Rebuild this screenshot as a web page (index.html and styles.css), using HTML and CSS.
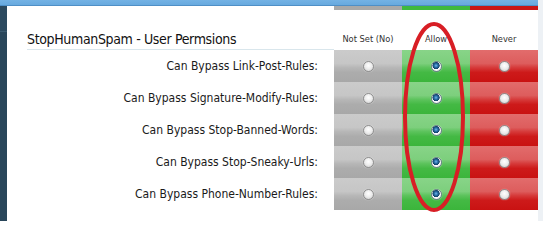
FILE: index.html
```html
<!DOCTYPE html>
<html>
<head>
<meta charset="utf-8">
<link rel="stylesheet" href="styles.css">
</head>
<body>
<div class="frame">
  <div class="content">
    <div class="topbar"></div>
    <div class="body">
      <div class="sidebar"></div>
      <div class="main">
        <div class="perm-grid">
          <div class="strip-blank"></div>
          <div class="strip strip-gray"></div>
          <div class="strip strip-green"></div>
          <div class="strip strip-red"></div>

          <div class="title-cell"><h2 class="title">StopHumanSpam - User Permsions</h2></div>
          <div class="col-head">Not Set (No)</div>
          <div class="col-head">Allow</div>
          <div class="col-head">Never</div>

          <div class="label">Can Bypass Link-Post-Rules:</div>
          <div class="cell cell-gray"><span class="radio"></span></div>
          <div class="cell cell-green"><span class="radio checked"></span></div>
          <div class="cell cell-red"><span class="radio"></span></div>

          <div class="label">Can Bypass Signature-Modify-Rules:</div>
          <div class="cell cell-gray"><span class="radio"></span></div>
          <div class="cell cell-green"><span class="radio checked"></span></div>
          <div class="cell cell-red"><span class="radio"></span></div>

          <div class="label">Can Bypass Stop-Banned-Words:</div>
          <div class="cell cell-gray"><span class="radio"></span></div>
          <div class="cell cell-green"><span class="radio checked"></span></div>
          <div class="cell cell-red"><span class="radio"></span></div>

          <div class="label">Can Bypass Stop-Sneaky-Urls:</div>
          <div class="cell cell-gray"><span class="radio"></span></div>
          <div class="cell cell-green"><span class="radio checked"></span></div>
          <div class="cell cell-red"><span class="radio"></span></div>

          <div class="label">Can Bypass Phone-Number-Rules:</div>
          <div class="cell cell-gray"><span class="radio"></span></div>
          <div class="cell cell-green"><span class="radio checked"></span></div>
          <div class="cell cell-red"><span class="radio"></span></div>
        </div>
      </div>
    </div>
  </div>
  <div class="edge"></div>
  <svg class="annotation" width="543" height="221" viewBox="0 0 543 221">
    <ellipse cx="434" cy="117" rx="29" ry="93" fill="none" stroke="#d81e25" stroke-width="4"/>
  </svg>
</div>
</body>
</html>
```

FILE: styles.css
```css
html, body {
  margin: 0;
  padding: 0;
  background: #ffffff;
}

body {
  font-family: "DejaVu Sans Condensed", "DejaVu Sans", Verdana, sans-serif;
  color: #222222;
  width: 543px;
  height: 221px;
  overflow: hidden;
}

.frame {
  position: relative;
  display: flex;
  width: 543px;
  height: 221px;
}

.content {
  width: 538px;
  display: flex;
  flex-direction: column;
}

.edge {
  width: 5px;
  background: #edf1f5;
}

.topbar {
  height: 6px;
  background: linear-gradient(#74b2e4, #65a8de);
  box-shadow: inset 0 -1px 0 #4f8fc6;
}

.body {
  display: flex;
  flex: 1;
}

.sidebar {
  width: 7px;
  background: linear-gradient(#2c4a5f 0, #2c4a5f 25px, #3b5b70 25px, #3b5b70 26px, #29465a 26px, #29465a 100%);
}

.main {
  flex: 1;
  background: #ffffff;
}

.perm-grid {
  display: grid;
  grid-template-columns: 327px 68px 68px 68px;
  grid-template-rows: 4px 40px repeat(5, 32px);
}

.strip-gray { background: #a9a9a9; }
.strip-green { background: #3fb93f; }
.strip-red { background: #c91616; }

.title-cell {
  display: flex;
  align-items: flex-end;
  margin-left: 20px;
  border-bottom: 1px solid #d9e6ec;
}

.title {
  margin: 0 0 1px 0;
  font-family: "DejaVu Sans Condensed", "DejaVu Sans", sans-serif;
  font-size: 14px;
  line-height: 17px;
  font-weight: normal;
  color: #111111;
  letter-spacing: -0.35px;
}

.col-head {
  display: flex;
  align-items: flex-end;
  justify-content: center;
  padding-bottom: 6px;
  font-family: "DejaVu Sans", sans-serif;
  font-size: 8.3px;
  color: #333333;
}

.label {
  display: flex;
  align-items: center;
  justify-content: flex-end;
  padding-right: 16px;
  font-family: "DejaVu Sans Condensed", "DejaVu Sans", sans-serif;
  font-size: 12px;
  color: #1a1a1a;
}

.cell {
  display: flex;
  align-items: center;
  justify-content: center;
}

.cell-gray {
  background: linear-gradient(#cbcbcb 0%, #c6c6c6 42%, #b7b7b7 55%, #acacac 70%, #a8a8a8 100%);
}

.cell-green {
  background: linear-gradient(#88d488 0%, #7dcf7d 42%, #5cc35c 55%, #44b944 70%, #3bb53b 100%);
}

.cell-red {
  background: linear-gradient(#e26c6c 0%, #dd5d5d 42%, #d63a3a 55%, #cd1a1a 70%, #c91212 100%);
}

.radio {
  width: 11px;
  height: 11px;
  box-sizing: border-box;
  border-radius: 50%;
  border: 1px solid #8f8f8f;
  background: radial-gradient(circle at 50% 40%, #ffffff 0%, #eeeeee 45%, #c9c9c9 100%);
  box-shadow: 0 0 1px rgba(255, 255, 255, 0.7);
}

.radio.checked {
  border-color: #6b7f8c;
  background: radial-gradient(circle at 45% 40%, #72b6ea 0%, #2a6fa8 24%, #123f66 46%, #ffffff 52%, #e8e8e8 75%, #cfcfcf 100%);
}

.annotation {
  position: absolute;
  left: 0;
  top: 0;
  pointer-events: none;
}
```
